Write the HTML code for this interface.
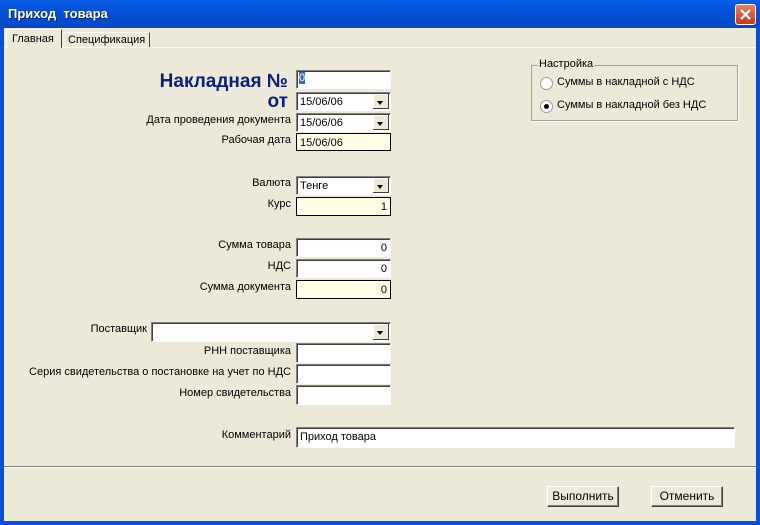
<!DOCTYPE html><html><head><meta charset="utf-8"><style>
body{margin:0;width:760px;height:525px;overflow:hidden;font-family:"Liberation Sans",sans-serif;font-size:11px;}
.win{position:absolute;left:0;top:0;width:760px;height:525px;background:#0a4fd8;}
.title{position:absolute;left:0;top:0;width:760px;height:28px;background:linear-gradient(#0a5fe8,#0451d6 40%,#0347c8);}
.title span{position:absolute;left:8px;top:6px;color:#fff;font-weight:bold;font-size:13px;text-shadow:1px 1px #0a246a;}
.close{position:absolute;left:735px;top:4px;width:19px;height:19px;border:1px solid #fff;border-radius:3px;background:linear-gradient(#e88060,#c43a14);}
.body{position:absolute;left:4px;top:28px;width:752px;height:493px;background:#ECE9D8;}
.a{position:absolute;}
.l{position:absolute;text-align:right;white-space:nowrap;}
.f{position:absolute;background:#fff;border-top:1px solid #808080;border-left:1px solid #808080;border-right:1px solid #fff;border-bottom:1px solid #fff;box-shadow:inset 1px 1px #404040;box-sizing:border-box;padding:3px 3px 0;white-space:nowrap;}
.y{background:#FFFDE6;}
.r{text-align:right;}
.dd{position:absolute;right:1px;top:1px;width:16px;bottom:1px;background:#ECE9D8;border-right:1px solid #404040;border-bottom:1px solid #404040;box-sizing:border-box;box-shadow:inset 1px 1px #fff;}
.dd:after{content:"";position:absolute;left:4px;top:7px;border-left:3.5px solid transparent;border-right:3.5px solid transparent;border-top:4px solid #000;}
.btn{position:absolute;width:72px;height:21px;background:#ECE9D8;border-top:1px solid #fff;border-left:1px solid #fff;border-right:1px solid #404040;border-bottom:1px solid #404040;box-shadow:inset -1px -1px #808080;box-sizing:border-box;text-align:center;line-height:18px;font-size:12px;}
.rad{position:absolute;width:11px;height:11px;border-radius:50%;background:#fff;border:1px solid #999;}
</style></head><body><div class="win">
<div class="title"><span>Приход&nbsp; товара</span><div class="close"><svg width="19" height="19"><path d="M5 5L14 14M14 5L5 14" stroke="#fff" stroke-width="2.2"/></svg></div></div>
<div class="body"></div>
<div class="a" style="left:4px;top:47px;width:752px;border-top:1px solid #fff"></div>
<div class="a" style="left:6px;top:29px;width:56px;height:19px;background:#ECE9D8;border-left:1px solid #fff;border-top:1px solid #fff;border-right:1px solid #404040;box-sizing:border-box;padding:3px 0 0 5px">Главная</div>
<div class="a" style="left:63px;top:32px;width:87px;height:15px;border-top:1px solid #fff;border-right:1px solid #404040;box-sizing:border-box;padding:1px 0 0 5px">Спецификация</div>
<div class="l" style="right:472px;top:71px;color:#0a1f80;font-weight:bold;font-size:19px">Накладная №</div>
<div class="l" style="right:472px;top:91px;color:#0a1f80;font-weight:bold;font-size:19px">от</div>
<div class="f" style="left:296px;top:70px;width:95px;height:19px;padding:1px 2px"><span style="background:#316ac5;color:#fff">0</span></div>
<div class="f" style="left:296px;top:92px;width:95px;height:19px">15/06/06<div class="dd"></div></div>
<div class="l" style="right:469px;top:114px">Дата проведения документа</div>
<div class="f" style="left:296px;top:113px;width:95px;height:19px">15/06/06<div class="dd"></div></div>
<div class="l" style="right:469px;top:134px">Рабочая дата</div>
<div class="f y" style="left:296px;top:133px;width:95px;height:18px;border:1px solid #000;box-shadow:none">15/06/06</div>
<div class="l" style="right:469px;top:177px">Валюта</div>
<div class="f" style="left:296px;top:176px;width:95px;height:19px">Тенге<div class="dd"></div></div>
<div class="l" style="right:469px;top:198px">Курс</div>
<div class="f y r" style="left:296px;top:197px;width:95px;height:19px;border:1px solid #000;box-shadow:none">1</div>
<div class="l" style="right:469px;top:239px">Сумма товара</div>
<div class="f r" style="left:296px;top:238px;width:95px;height:19px">0</div>
<div class="l" style="right:469px;top:260px">НДС</div>
<div class="f r" style="left:296px;top:259px;width:95px;height:19px">0</div>
<div class="l" style="right:469px;top:281px">Сумма документа</div>
<div class="f y r" style="left:296px;top:280px;width:95px;height:19px;border:1px solid #000;box-shadow:none">0</div>
<div class="l" style="right:613px;top:323px">Поставщик</div>
<div class="f" style="left:151px;top:322px;width:240px;height:20px"><div class="dd"></div></div>
<div class="l" style="right:469px;top:345px">РНН поставщика</div>
<div class="f" style="left:296px;top:343px;width:95px;height:20px"></div>
<div class="l" style="right:469px;top:366px">Серия свидетельства о постановке на учет по НДС</div>
<div class="f" style="left:296px;top:364px;width:95px;height:20px"></div>
<div class="l" style="right:469px;top:387px">Номер свидетельства</div>
<div class="f" style="left:296px;top:385px;width:95px;height:20px"></div>
<div class="l" style="right:469px;top:429px">Комментарий</div>
<div class="f" style="left:296px;top:427px;width:439px;height:21px">Приход товара</div>
<div class="a" style="left:531px;top:65px;width:207px;height:56px;border:1px solid #a0a0a0;box-sizing:border-box;box-shadow:1px 1px #fff"></div>
<div class="a" style="left:538px;top:58px;background:#ECE9D8;padding:0 1px">Настройка</div>
<div class="rad" style="left:540px;top:77px"></div><div class="a" style="left:557px;top:76px">Суммы в накладной с НДС</div>
<div class="rad" style="left:540px;top:100px"><div style="position:absolute;left:3px;top:3px;width:5px;height:5px;border-radius:50%;background:#000"></div></div><div class="a" style="left:557px;top:99px">Суммы в накладной без НДС</div>
<div class="a" style="left:4px;top:466px;width:752px;border-top:1px solid #808080;border-bottom:1px solid #fff"></div>
<div class="btn" style="left:547px;top:486px">Выполнить</div>
<div class="btn" style="left:651px;top:486px">Отменить</div>
</div></body></html>
